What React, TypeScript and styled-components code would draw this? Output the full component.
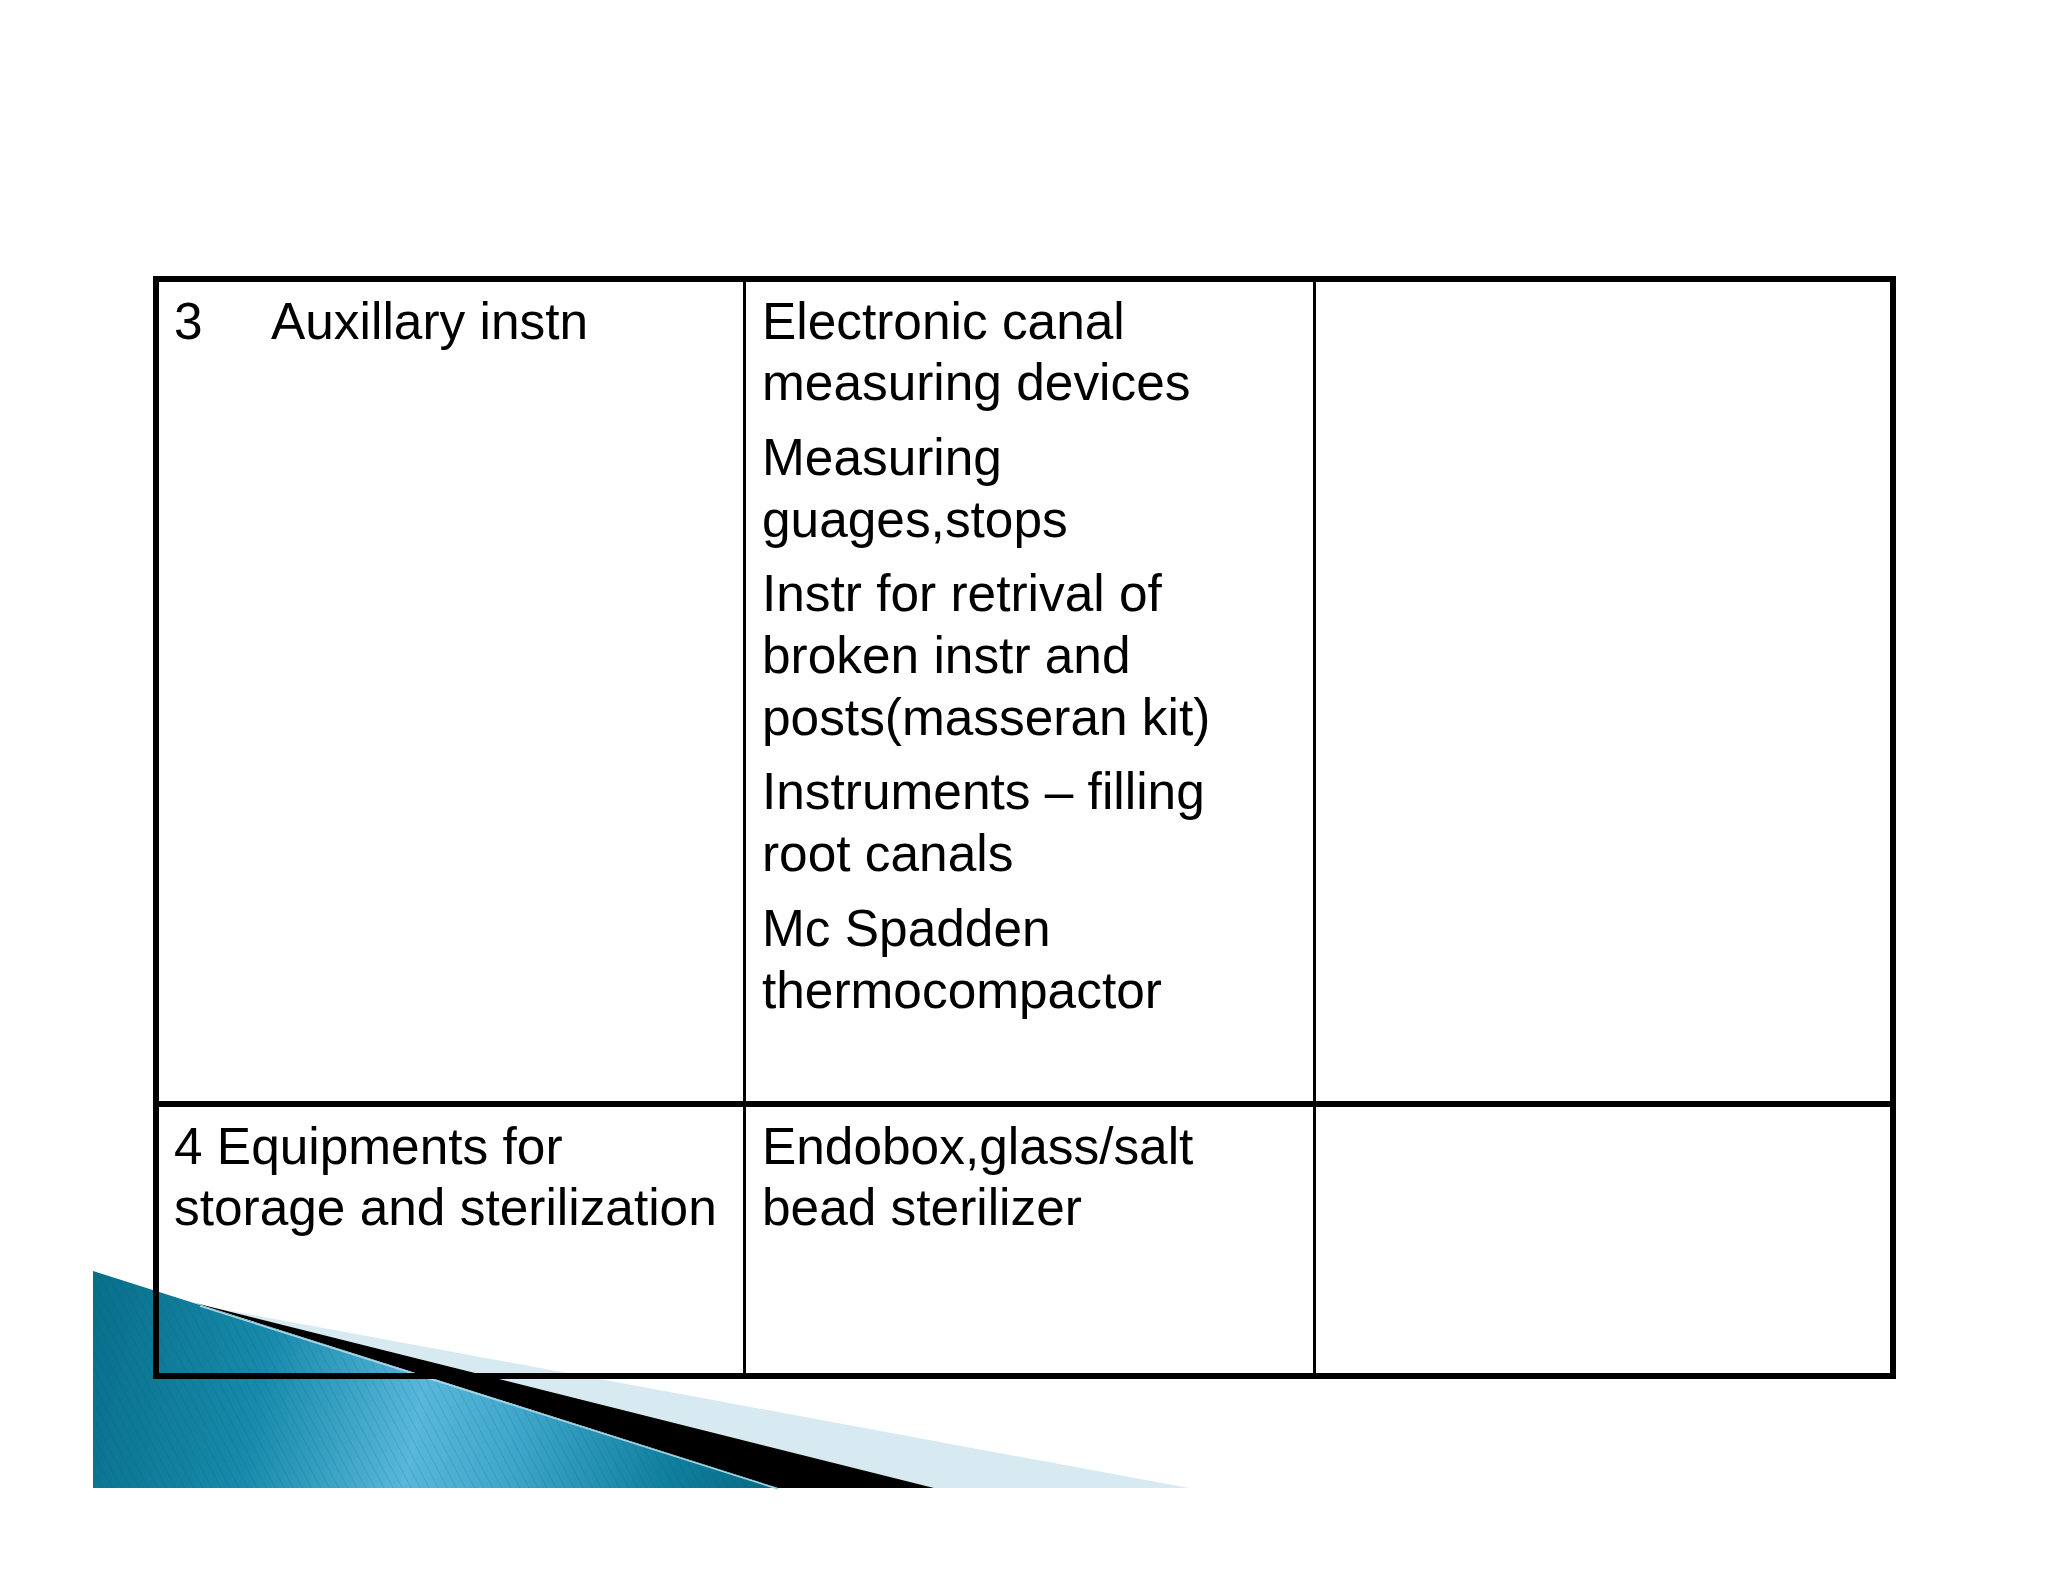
import React from "react";
import styled, {createGlobalStyle} from "styled-components";

const GlobalStyle = createGlobalStyle`
  html, body {
    margin: 0;
    padding: 0;
    background: #ffffff;
  }

  body {
    font-family: "Liberation Sans", Arial, sans-serif;
    color: #000000;
  }
`;

const Slide = styled.div`
  position: relative;
  width: 2048px;
  height: 1582px;
  padding: 276px 0 0 153px;
  box-sizing: border-box;
  overflow: hidden;
  background: #ffffff;
`;

const Corner = styled.svg`
  position: absolute;
  left: 0;
  top: 0;
  width: 2048px;
  height: 1582px;
  z-index: 0;
  pointer-events: none;
`;

const Table = styled.div`
  position: relative;
  z-index: 1;
  display: grid;
  grid-template-columns: 587px 570px 574px;
  grid-template-rows: 819px 272px;
  width: 1743px;
  border: 6px solid #000000;
  box-sizing: border-box;
`;

const Cell = styled.div<{ $divider?: boolean; $lower?: boolean; $pad: number }>`
  box-sizing: border-box;
  padding: 8.5px 0 0 ${p => p.$pad}px;
  border-right: ${p => (p.$divider ? "3px solid #000000" : "none")};
  border-top: ${p => (p.$lower ? "6px solid #000000" : "none")};
  font-size: 51.4px;
  line-height: 61.7px;
`;

const Entry = styled.p`
  margin: 0;
  white-space: nowrap;

  & + & {
    margin-top: 13px;
  }
`;

const Num = styled.span`
  display: inline-block;
  width: 97px;
`;

const rows = [
    {
        first: <Entry><Num>3</Num>Auxillary instn</Entry>,
        items: [
            ["Electronic canal", "measuring devices"],
            ["Measuring", "guages,stops"],
            ["Instr for retrival of", "broken instr and", "posts(masseran kit)"],
            ["Instruments \u2013 filling", "root canals"],
            ["Mc Spadden", "thermocompactor"],
        ],
    },
    {
        first: <Entry>4 Equipments for<br/>storage and sterilization</Entry>,
        items: [
            ["Endobox,glass/salt", "bead sterilizer"],
        ],
    },
];

const CornerArt = () => (
    <Corner viewBox="0 0 2048 1582">
        <defs>
            <linearGradient id="blueFill" gradientUnits="userSpaceOnUse" x1="93" y1="1330" x2="778" y2="1470">
                <stop offset="0" stopColor="#09708c"/>
                <stop offset="0.25" stopColor="#178aab"/>
                <stop offset="0.48" stopColor="#58b7da"/>
                <stop offset="0.62" stopColor="#3fa7cb"/>
                <stop offset="0.85" stopColor="#0f7f9e"/>
                <stop offset="1" stopColor="#086983"/>
            </linearGradient>
            <pattern id="stripes" width="8" height="12" patternUnits="userSpaceOnUse"
                     patternTransform="rotate(-28)">
                <line x1="0" y1="0" x2="0" y2="12" stroke="#05485d" strokeOpacity="0.22" strokeWidth="1.2"/>
            </pattern>
        </defs>
        <polygon points="210,1307 1189,1488 934,1488" fill="#d7e9f1"/>
        <polygon points="195,1303 934,1488 778,1488" fill="#000000"/>
        <polygon points="93,1271 778,1488 93,1488" fill="url(#blueFill)"/>
        <polygon points="93,1271 778,1488 93,1488" fill="url(#stripes)"/>
        <line x1="200" y1="1306" x2="778" y2="1489" stroke="#a9d6e6" strokeWidth="1.5"/>
    </Corner>
);

export default function App() {
    return (
        <>
            <GlobalStyle/>
            <Slide>
                <CornerArt/>
                <Table>
                    {rows.map((row, r) => (
                        <React.Fragment key={r}>
                            <Cell $divider $lower={r > 0} $pad={15}>
                                {row.first}
                            </Cell>
                            <Cell $divider $lower={r > 0} $pad={16}>
                                {row.items.map((lines, i) => (
                                    <Entry key={i}>
                                        {lines.map((line, j) => (
                                            <React.Fragment key={j}>
                                                {j > 0 && <br/>}
                                                {line}
                                            </React.Fragment>
                                        ))}
                                    </Entry>
                                ))}
                            </Cell>
                            <Cell $lower={r > 0} $pad={16}/>
                        </React.Fragment>
                    ))}
                </Table>
            </Slide>
        </>
    );
}
